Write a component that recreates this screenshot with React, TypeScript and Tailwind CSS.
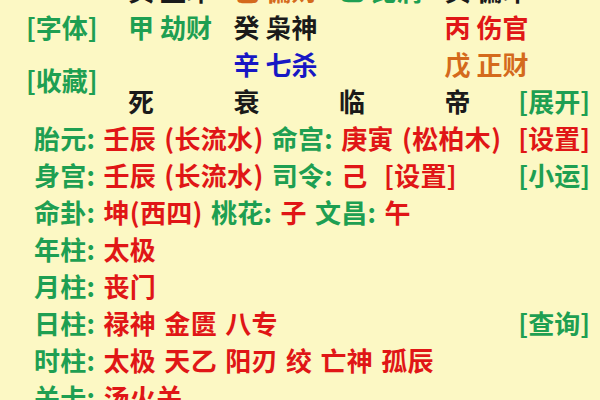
import React from "react";

const font = { fontFamily: '"Noto Sans CJK SC", "Noto Sans", sans-serif' };

export default function App() {
  const G = "text-[#1e9f52]";
  const R = "text-[#e01616]";
  const B = "text-[#1717c4]";
  const O = "text-[#d46a1c]";
  const K = "text-[#1a1a1a]";
  const grid: [string, string][][] = [
    [["癸 正印", K], ["己 偏财", O], ["乙 比肩", G], ["癸 偏印", K]],
    [["甲 劫财", G], ["癸 枭神", K], ["", ""], ["丙 伤官", R]],
    [["", ""], ["辛 七杀", B], ["", ""], ["戊 正财", O]],
    [["死", K], ["衰", K], ["临", K], ["帝", K]],
  ];
  return (
    <div
      className="w-[600px] h-[400px] overflow-hidden bg-[#fcf8c4] text-[26px] font-bold"
      style={font}
    >
      <div className="-mt-[29px]">
        <div className="flex">
          <div className="w-[128px] shrink-0 pl-[26px] flex flex-col">
            <div className="h-[37px]" />
            <div className={"h-[37px] leading-[37px] whitespace-nowrap " + G}>[字体]</div>
            <div className={"mt-[16px] h-[37px] leading-[37px] whitespace-nowrap " + G}>[收藏]</div>
          </div>
          <div className="flex-1 flex flex-col">
            {grid.map((row, i) => (
              <div key={i} className="flex h-[37px] leading-[37px] items-center whitespace-pre">
                {row.map(([t, c], j) => (
                  <div key={j} className={(j < 3 ? "w-[105.5px] shrink-0 " : "") + c}>
                    {t}
                  </div>
                ))}
                {i === 3 && <div className={"ml-auto pr-[10px] " + G}>[展开]</div>}
              </div>
            ))}
          </div>
        </div>
        <div className="pl-[34px] pr-[10px] flex flex-col">
          <Row
            left={
              <>
                <span className={G}>胎元: </span>
                <span className={R}>壬辰 (长流水) </span>
                <span className={G}>命宫: </span>
                <span className={R}>庚寅 (松柏木)</span>
              </>
            }
            right={<span className={R}>[设置]</span>}
          />
          <Row
            left={
              <>
                <span className={G}>身宫: </span>
                <span className={R}>壬辰 (长流水) </span>
                <span className={G}>司令: </span>
                <span className={R}>己  [设置]</span>
              </>
            }
            right={<span className={G}>[小运]</span>}
          />
          <Row
            left={
              <>
                <span className={G}>命卦: </span>
                <span className={R}>坤(西四) </span>
                <span className={G}>桃花: </span>
                <span className={R}>子 </span>
                <span className={G}>文昌: </span>
                <span className={R}>午</span>
              </>
            }
          />
          <Row
            left={
              <>
                <span className={G}>年柱: </span>
                <span className={R}>太极</span>
              </>
            }
          />
          <Row
            left={
              <>
                <span className={G}>月柱: </span>
                <span className={R}>丧门</span>
              </>
            }
          />
          <Row
            left={
              <>
                <span className={G}>日柱: </span>
                <span className={R}>禄神 金匮 八专</span>
              </>
            }
            right={<span className={G}>[查询]</span>}
          />
          <Row
            left={
              <>
                <span className={G}>时柱: </span>
                <span className={R}>太极 天乙 阳刃 绞 亡神 孤辰</span>
              </>
            }
          />
          <Row
            left={
              <>
                <span className={G}>关卡: </span>
                <span className={R}>汤火关</span>
              </>
            }
          />
        </div>
      </div>
    </div>
  );
}

function Row({ left, right }: { left: React.ReactNode; right?: React.ReactNode }) {
  return (
    <div className="flex items-center justify-between h-[37px] leading-[37px] whitespace-pre">
      <div className="[word-spacing:2px] tracking-[0.3px]">{left}</div>
      {right && <div>{right}</div>}
    </div>
  );
}
